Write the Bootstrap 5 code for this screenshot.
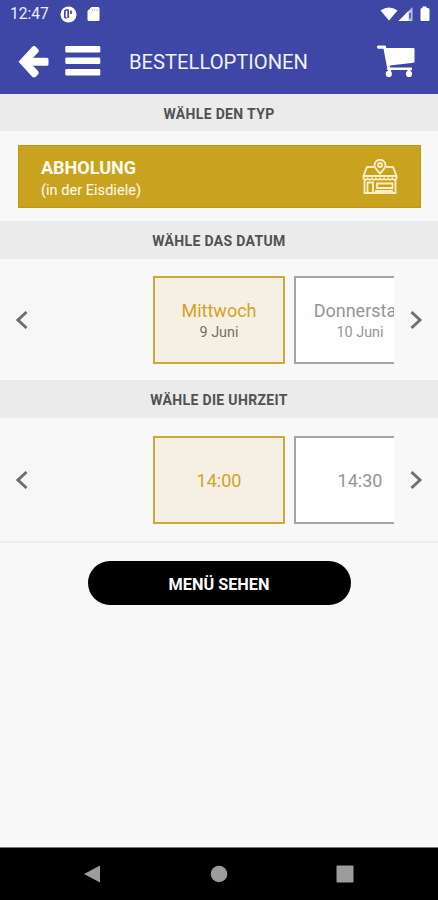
<!DOCTYPE html>
<html lang="de">
<head>
<meta charset="utf-8">
<meta name="viewport" content="width=device-width, initial-scale=1">
<title>Bestelloptionen</title>
<link href="https://cdn.jsdelivr.net/npm/bootstrap@5.3.0/dist/css/bootstrap.min.css" rel="stylesheet">
<style>
  body { font-family: Roboto, "Liberation Sans", sans-serif; background: #f8f8f8; height: 900px; overflow: hidden; line-height: 1; }
  svg { display: block; flex: none; }
  .top-area { background: #3e46a6; color: #fff; height: 94px; }
  .status-row { height: 28px; padding: 0 6px 0 10px; }
  .clock { font-size: 15.6px; width: 50px; color: #eceefa; padding-top: 2px; }
  .app-row { height: 66px; padding: 0 22px 0 18px; }
  .app-title { font-size: 20.2px; font-weight: 400; margin-left: 28px; padding-top: 2px; color: #f0f1fb; }
  .section-title { height: 37px; padding-top: 3px; background: #ebebeb; color: #505154; font-size: 14px; font-weight: 700; letter-spacing: .34px; }
  .section-title.tall { height: 38px; }
  .type-zone { height: 90px; padding: 14px 17px 13px 18px; }
  .type-card { background: #c9a21f; border: 1px solid #bd961a; border-radius: 0; color: #fffbee; padding: 3px 21px 0 22px; }
  .type-name { font-size: 18px; font-weight: 700; }
  .type-note { font-size: 14.6px; margin-top: 6px; }
  .picker { height: 121px; padding: 1px 14px 0; }
  .picker.time { height: 123px; }
  .slot-view { width: 350px; padding-left: 109px; gap: 9px; }
  .slot { width: 132px; height: 88px; flex: none; border: 2px solid #a5a5a5; background: #fefefe; color: #969696; border-radius: 0; padding: 2px 0 0; font-size: 18px; font-weight: 400; line-height: 1; }
  .slot.chosen { border-color: #cfa93e; background: #f5f0e3; color: #cfa429; }
  .slot-sub { font-size: 14.4px; margin-top: 6px; }
  .chosen .slot-sub { color: #717069; }
  .divider { height: 2px; background: #ededed; }
  .menu-btn { width: 263px; height: 44px; margin-top: 18px; background: #000; color: #fff; font-size: 16.3px; font-weight: 700; }
  .system-bar { height: 53px; background: #000; border-top: 1px solid #777; padding: 0 84px 0 83px; }
</style>
</head>
<body class="d-flex flex-column">
<header class="top-area">
  <div class="status-row d-flex align-items-center">
    <span class="clock">12:47</span>
    <svg width="17" height="17" viewBox="0 0 17 17"><circle cx="8.5" cy="8.5" r="8" fill="#fff"/><path d="M8 4H6.400Q4.800 4 4.800 6v4.500Q4.800 12 6.500 12.200M8.200 3.500v8.500M11 4.500v3.500" fill="none" stroke="#3e46a6" stroke-width="1.700"/></svg>
    <svg class="ms-2" width="16" height="16" viewBox="0 0 16 16"><path d="M6.500 1H13q1.500 0 1.500 1.500v11q0 1.500-1.500 1.500H4q-1.500 0-1.500-1.500V5z" fill="#fff"/><path d="M7.300 3v2M9.700 3v2M12 3v2" stroke="#b8bbe0"/></svg>
    <svg class="ms-auto" width="52" height="18" viewBox="0 0 52 18"><path d="M.5 5.500Q9 -.5 17.500 5.500L9 15.500z" fill="#fff"/><path d="M18.500 16L32.500 2v14z" fill="#b9bde6"/><path d="M18.500 16l10-10v10z" fill="#fff"/><path d="M30 8v5.500" stroke="#3e46a6" stroke-width="1.500"/><path d="M42.500 1.500h4v1.500H48q1.500 0 1.500 1.500V15q0 1-1 1h-7q-1 0-1-1V4.500Q40.500 3 42 3h.5z" fill="#fff"/></svg>
  </div>
  <nav class="app-row d-flex align-items-center">
    <svg width="32" height="34" viewBox="0 0 32 34"><path d="M.5 17.700L14 3Q16 1 18 3l2 2q1.500 1.500 0 3.500L15 13.700H29q1.500 0 1.500 1.500v5q0 1.500-1.500 1.500H15l5 5.200q1.500 2 0 3.500l-2 2q-2 2-4 0z" fill="#fff"/></svg>
    <svg width="37" height="32" viewBox="0 0 37 32" style="margin-left:14px"><g fill="#fff"><rect x="1.300" y="1" width="35" height="6.500" rx="1.200"/><rect x="1.300" y="12.500" width="35" height="6.500" rx="1.200"/><rect x="1.300" y="24" width="35" height="6.500" rx="1.200"/></g></svg>
    <span class="app-title">BESTELLOPTIONEN</span>
    <svg class="ms-auto" width="40" height="34" viewBox="0 0 40 34"><path d="M2 1.500H9q1 0 1.300 2.500H37.500q1 0 1 1V17.500q0 1-1 1.200L14 21.500v2H36V26H11.500q-1-.5-.5-3L7.500 4.800H2Q-.3 3 2 1.500z" fill="#fff"/><path d="M12 25h3v3h-3zM31.500 25h3v3h-3z" fill="#fff"/><circle cx="12.800" cy="29.900" r="3.100" fill="#fff"/><circle cx="33" cy="29.900" r="3.100" fill="#fff"/></svg>
  </nav>
</header>

<main class="flex-grow-1">
  <h2 class="section-title d-flex align-items-center justify-content-center m-0">WÄHLE DEN TYP</h2>
  <div class="type-zone">
    <div class="card type-card h-100 flex-row align-items-center justify-content-between">
      <div>
        <div class="type-name">ABHOLUNG</div>
        <div class="type-note">(in der Eisdiele)</div>
      </div>
      <svg width="38" height="38" viewBox="0 0 36 38" fill="none" stroke="#fbefc5" stroke-width="1.800"><path d="M12 8H5L1.500 17v2.500q2 2.500 4.200 0 2 2.500 4.100 0 2 2.500 4.100 0 2 2.500 4.100 0 2 2.500 4.100 0 2 2.500 4.100 0 2 2.500 4.100 0 2 2.500 4.200 0V17L31 8h-7"/><path d="M1.500 17h33" stroke-width="2.200"/><path d="M2.500 20v14h31V20M5.500 33V23.500H11V33M15 24.500h15.500v4.500H15zM13 32h18"/><path d="M18 14.500Q12.500 9 12.500 6a5.500 5.200 0 0 1 11 0Q23.500 9 18 14.500z"/><circle cx="18" cy="6" r="2"/></svg>
    </div>
  </div>

  <h2 class="section-title tall d-flex align-items-center justify-content-center m-0">WÄHLE DAS DATUM</h2>
  <div class="picker d-flex align-items-center justify-content-between">
    <svg width="16" height="22" viewBox="0 0 16 22"><path d="M12.500 3L4 11l8.500 8" fill="none" stroke="#707070" stroke-width="3"/></svg>
    <div class="slot-view d-flex overflow-hidden">
      <button class="btn slot chosen"><div>Mittwoch</div><div class="slot-sub">9 Juni</div></button>
      <button class="btn slot"><div>Donnerstag</div><div class="slot-sub">10 Juni</div></button>
    </div>
    <svg width="16" height="22" viewBox="0 0 16 22"><path d="M3.500 3L12 11l-8.500 8" fill="none" stroke="#707070" stroke-width="3"/></svg>
  </div>

  <h2 class="section-title tall d-flex align-items-center justify-content-center m-0">WÄHLE DIE UHRZEIT</h2>
  <div class="picker time d-flex align-items-center justify-content-between">
    <svg width="16" height="22" viewBox="0 0 16 22"><path d="M12.500 3L4 11l8.500 8" fill="none" stroke="#707070" stroke-width="3"/></svg>
    <div class="slot-view d-flex overflow-hidden">
      <button class="btn slot chosen">14:00</button>
      <button class="btn slot">14:30</button>
    </div>
    <svg width="16" height="22" viewBox="0 0 16 22"><path d="M3.500 3L12 11l-8.500 8" fill="none" stroke="#707070" stroke-width="3"/></svg>
  </div>
  <div class="divider"></div>
  <button class="btn menu-btn rounded-pill d-block mx-auto px-0 pb-0 pt-1 border-0">MENÜ SEHEN</button>
</main>

<footer class="system-bar d-flex align-items-center justify-content-between">
  <svg width="18" height="18" viewBox="0 0 18 18"><path d="M1 9L17 .5v17z" fill="#9c9c9c"/></svg>
  <svg width="18" height="18" viewBox="0 0 18 18"><circle cx="9" cy="9" r="8.300" fill="#9c9c9c"/></svg>
  <svg width="18" height="18" viewBox="0 0 18 18"><rect x=".5" y=".5" width="17" height="17" rx="1" fill="#9c9c9c"/></svg>
</footer>
<script src="https://cdn.jsdelivr.net/npm/bootstrap@5.3.0/dist/js/bootstrap.bundle.min.js"></script>
</body>
</html>
